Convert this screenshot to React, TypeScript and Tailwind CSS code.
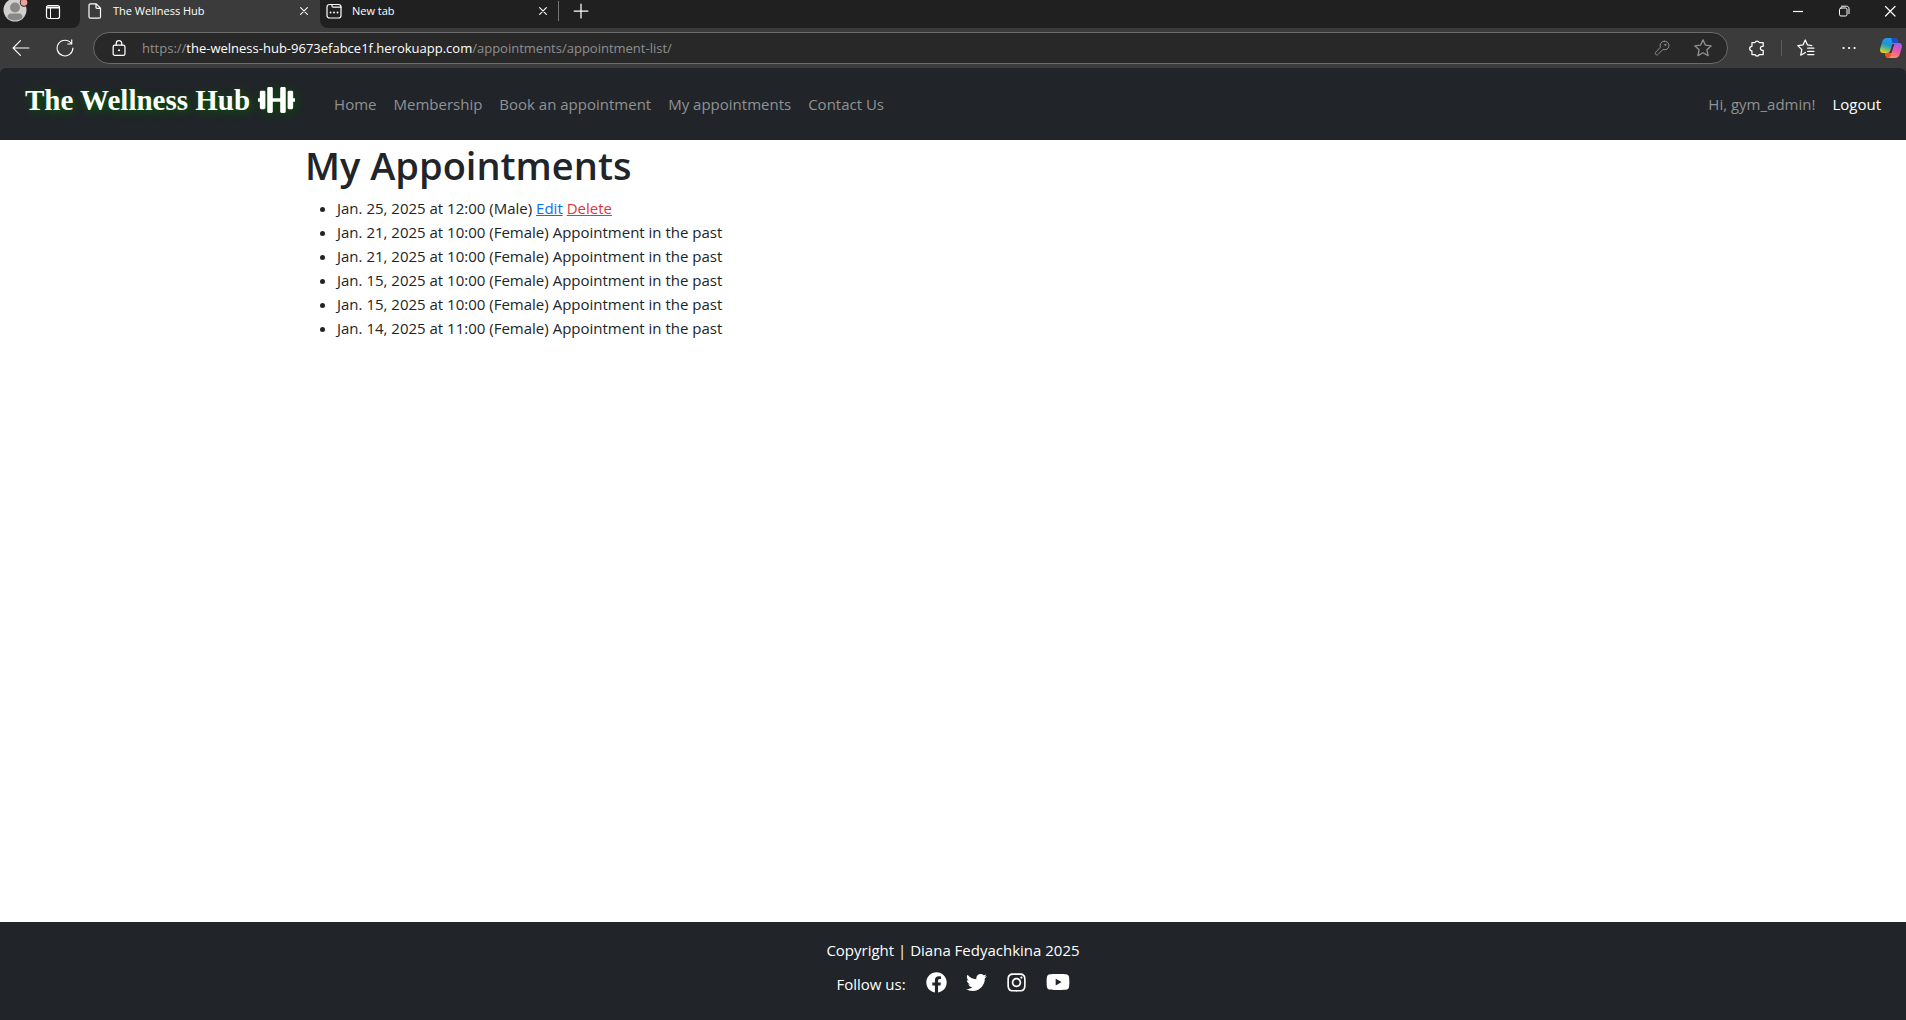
import type { ReactNode } from "react";
import { FaDumbbell, FaFacebook, FaInstagram, FaTwitter, FaYoutube } from "react-icons/fa";

const navLinks = ["Home", "Membership", "Book an appointment", "My appointments", "Contact Us"];

const appointments = [
  { when: "Jan. 25, 2025 at 12:00", who: "Male", past: false },
  { when: "Jan. 21, 2025 at 10:00", who: "Female", past: true },
  { when: "Jan. 21, 2025 at 10:00", who: "Female", past: true },
  { when: "Jan. 15, 2025 at 10:00", who: "Female", past: true },
  { when: "Jan. 15, 2025 at 10:00", who: "Female", past: true },
  { when: "Jan. 14, 2025 at 11:00", who: "Female", past: true },
];

const socials = [
  { name: "Facebook", Icon: FaFacebook, size: "h-[21px] w-[21px]" },
  { name: "Twitter", Icon: FaTwitter, size: "h-[21px] w-[21px]" },
  { name: "Instagram", Icon: FaInstagram, size: "h-[21px] w-[21px]" },
  { name: "YouTube", Icon: FaYoutube, size: "h-6 w-6" },
];

function Glyph({ children, className }: { children: ReactNode; className: string }) {
  return (
    <svg viewBox="0 0 16 16" fill="none" stroke="currentColor" strokeLinecap="round" strokeLinejoin="round" className={className} aria-hidden="true">
      {children}
    </svg>
  );
}

function CloseGlyph({ className }: { className: string }) {
  return (
    <Glyph className={className}>
      <path d="M3.500 3.500l9 9M12.500 3.500l-9 9" strokeWidth="1.500" />
    </Glyph>
  );
}

function Avatar() {
  return (
    <svg viewBox="0 0 28 24" className="h-6 w-7" aria-hidden="true">
      <circle cx="12" cy="10" r="11.500" fill="#d2d0ce" />
      <circle cx="12" cy="7.500" r="5" fill="#8a8886" />
      <path d="M4.500 17.500C4.500 14.500 6 13.500 8 13.500h8c2 0 3.500 1 3.500 4-2 2.200-4.500 3-7.500 3s-5.500-.8-7.500-3z" fill="#8a8886" />
      <circle cx="21" cy="2.500" r="4.200" fill="#202020" />
      <circle cx="21" cy="2.500" r="3.300" fill="#f1a09a" />
    </svg>
  );
}

function Copilot() {
  return (
    <svg viewBox="0 0 24 24" className="h-6 w-6" aria-hidden="true">
      <defs>
        <linearGradient id="cpLeft" x1="0.600" y1="0" x2="0.200" y2="1">
          <stop offset="0" stopColor="#1aa0f0" />
          <stop offset="0.450" stopColor="#1f93d8" />
          <stop offset="0.700" stopColor="#5dbb7b" />
          <stop offset="1" stopColor="#f5cb20" />
        </linearGradient>
        <linearGradient id="cpRight" x1="0.700" y1="0" x2="0.300" y2="1">
          <stop offset="0" stopColor="#a35af0" />
          <stop offset="0.500" stopColor="#ee5aa0" />
          <stop offset="1" stopColor="#ff9a50" />
        </linearGradient>
      </defs>
      <path d="M8 2h8c1.500 0 2 1 2.500 2.500l.8 2.500h-3c-1.500 0-2.300 1-2.800 2.500L11 17H4.500C1.500 17 .5 15 1.300 12l2-6.500C4 3.200 5.500 2 8 2z" fill="url(#cpLeft)" />
      <path d="M12 2h4c1.500 0 2 1 2.500 2.500l.8 2.500h-3c-1 0-1.800.5-2.300 1.500z" fill="#2448c9" />
      <path d="M16 22H9c-1.500 0-2-1-2.500-2.500L5.800 17h2.500c1.500 0 2.300-1 2.800-2.500L13.500 7h6c3 0 4 2 3.200 5l-2 6.500C20 20.800 18.500 22 16 22z" fill="url(#cpRight)" />
      <path d="M5.800 17h2.500c1.500 0 2.300-1 2.800-2.500l1 4c-.5 2-1.500 3.500-3.100 3.500-1.500 0-2-1-2.500-2.500z" fill="#e8502e" />
      <path d="M13.300 8h2.200l-3 9H9.800c.8-.5 1.200-1.300 1.500-2.500z" fill="#3b3b3b" />
    </svg>
  );
}

function TabStrip() {
  return (
    <div className="flex h-7 items-stretch bg-[#202020] font-['Open_Sans',sans-serif] text-[11px] text-white">
      <div className="flex bg-[#3b3b3b]">
        <div className="flex w-20 items-center gap-[14px] rounded-br-lg bg-[#202020] pb-1 pl-[3px]">
          <button aria-label="Profile"><Avatar /></button>
          <button aria-label="Tab actions">
            <Glyph className="h-4 w-4">
              <rect x="1.500" y="1.500" width="13" height="13" rx="2" strokeWidth="1.200" />
              <path d="M2 3.500h12" strokeWidth="2" />
              <path d="M5.500 4v10" />
            </Glyph>
          </button>
        </div>
      </div>
      <div className="flex w-60 items-center bg-[#3b3b3b] pb-[6px] pl-[7px]">
        <Glyph className="h-4 w-4">
          <path d="M3.500.8h5.700l4.300 4.300v8.600c0 .9-.6 1.500-1.500 1.500H3.500c-.9 0-1.500-.6-1.500-1.500V2.300C2 1.400 2.600.8 3.500.8zM9 .8v3.400c0 .7.400 1.100 1.100 1.100h3.400" strokeWidth="1.200" />
        </Glyph>
        <span className="ml-[10px] flex-1">The Wellness Hub</span>
        <button aria-label="Close The Wellness Hub" className="mr-2"><CloseGlyph className="h-4 w-4 p-[2px]" /></button>
      </div>
      <div className="flex bg-[#3b3b3b]">
        <div className="flex w-[238px] items-center rounded-bl-lg bg-[#202020] pb-[6px] pl-[6px]">
          <Glyph className="h-4 w-4">
            <rect x="1" y="1.500" width="14" height="13.500" rx="2.500" strokeWidth="1.200" />
            <path d="M6 1.500v1.500c0 .8.400 1.200 1.200 1.200H15" strokeWidth="1.200" />
            <path d="M4.500 9.500h.1M8 9.500h.1M11.500 9.500h.1" strokeWidth="1.800" />
          </Glyph>
          <span className="ml-[10px] flex-1">New tab</span>
          <button aria-label="Close New tab" className="mr-[7px]"><CloseGlyph className="h-4 w-4 p-[2px]" /></button>
        </div>
      </div>
      <div className="mt-px h-5 w-px self-start bg-[#757575]" />
      <button aria-label="New tab" className="mb-[6px] ml-3">
        <Glyph className="h-5 w-5"><path d="M8 2.500v11M2.500 8h11" strokeWidth="1" /></Glyph>
      </button>
      <div className="ml-auto flex items-center gap-[30px] pb-[6px] pr-2">
        <button aria-label="Minimize"><Glyph className="h-4 w-4"><path d="M3 8.500h10" strokeWidth="1.200" strokeLinecap="butt" /></Glyph></button>
        <button aria-label="Restore">
          <Glyph className="h-4 w-4">
            <rect x="3.500" y="5" width="7.500" height="8" rx="1.500" />
            <path d="M5.500 3.200h5c1.500 0 2.500 1 2.500 2.500v5" />
          </Glyph>
        </button>
        <button aria-label="Close window"><Glyph className="h-4 w-4"><path d="M3.500 3.500l9.500 9.500M13 3.500L3.500 13" strokeWidth="1.200" /></Glyph></button>
      </div>
    </div>
  );
}

function Toolbar() {
  return (
    <div className="flex h-10 items-center bg-[#3b3b3b] pr-[3px] text-white">
      <button aria-label="Back" className="ml-3">
        <Glyph className="h-[18px] w-[18px]"><path d="M15 8H1M7.500 1.500L1 8l6.500 6.500" /></Glyph>
      </button>
      <button aria-label="Refresh" className="ml-[26px]">
        <Glyph className="h-[18px] w-[18px]"><path d="M13.700 4A7 7 0 1 0 15 8M14 .8v3.600h-3.600" /></Glyph>
      </button>
      <div className="ml-[19px] flex h-8 flex-1 items-center rounded-full border border-[#6b6b6b] bg-[#282828] pl-4 pr-[15px]">
        <Glyph className="h-[18px] w-[18px]">
          <rect x="2.800" y="5.500" width="10.500" height="9" rx="1.500" strokeWidth="1.100" />
          <path d="M5.500 5.500V4a2.500 2.500 0 0 1 5 0v1.500" strokeWidth="1.100" />
          <circle cx="8" cy="10" r=".4" fill="currentColor" />
        </Glyph>
        <div className="ml-[14px] flex-1 font-['Open_Sans',sans-serif] text-[13px] leading-5 text-[#8f8f8f]">
          https://<span className="text-white">the-welness-hub-9673efabce1f.herokuapp.com</span>/appointments/appointment-list/
        </div>
        <button aria-label="Saved passwords" className="mr-6 text-[#8f8f8f]">
          <Glyph className="h-4 w-4">
            <path d="M10.200 1.200a4.300 4.300 0 1 1-1.200 8.200L4.200 14.300c-.8.800-2.100.8-2.600.1-.5-.7-.4-1.700.3-2.400L6.400 7.200a4.300 4.300 0 0 1 3.800-6z" />
            <circle cx="11.300" cy="4.800" r=".6" fill="currentColor" />
          </Glyph>
        </button>
        <button aria-label="Add to favorites" className="text-[#8f8f8f]">
          <Glyph className="h-[18px] w-[18px]"><path d="M8 .8l2.200 4.700 5.100.6-3.800 3.500 1 5.200L8 12.200l-4.500 2.600 1-5.200L.7 6.100l5.100-.6z" strokeWidth="1.200" /></Glyph>
        </button>
      </div>
      <button aria-label="Extensions" className="ml-5">
        <Glyph className="h-[18px] w-[18px]">
          <path d="M3.500 3.200h2.700a2 2 0 0 1 3.800 0h3.500v3.300h-.7a1.800 1.800 0 0 0 0 3.600h.7v3.700H10a2 2 0 0 1-3.800 0H3.500v-3.300a2 2 0 0 1 0-4z" strokeWidth="1.100" />
        </Glyph>
      </button>
      <div className="ml-[15px] h-4 w-px bg-[#5c5c5c]" />
      <button aria-label="Favorites" className="ml-[15px]">
        <Glyph className="h-[18px] w-[18px]">
          <path d="M13.200 5.800L9.300 5.300 7.300.9 5.300 5.300.8 5.900l3.500 3.500-1 5L7.500 12M9.500 8.200H15M9.500 11h5.500M9.500 13.800H15" strokeWidth="1.100" />
        </Glyph>
      </button>
      <button aria-label="Settings and more" className="ml-[26px]">
        <Glyph className="h-4 w-4"><path d="M2.500 8h.1M8 8h.1M13.500 8h.1" strokeWidth="2.200" /></Glyph>
      </button>
      <button aria-label="Copilot" className="ml-[22px]"><Copilot /></button>
    </div>
  );
}

export default function App() {
  return (
    <div className="flex min-h-screen flex-col bg-white font-['Open_Sans','Noto_Sans',sans-serif] text-[15px] leading-6 text-[#212529]">
      <TabStrip />
      <Toolbar />
      <header className="bg-[#3b3b3b]">
        <nav className="flex h-[72px] items-center rounded-t-md bg-[#212529] px-[25px] text-[#909294]">
          <a href="#" className="mb-2 flex items-center gap-2 whitespace-nowrap font-['Liberation_Serif',serif] text-[29px] font-bold leading-9 text-white [text-shadow:2px_2px_8px_#006400]">
            The Wellness Hub
            <FaDumbbell className="h-[30px] w-[37px] [filter:drop-shadow(2px_2px_4px_#004d00)]" />
          </a>
          <ul className="ml-[39px] flex gap-[17px]">
            {navLinks.map((label) => (
              <li key={label}><a href="#">{label}</a></li>
            ))}
          </ul>
          <div className="ml-auto flex gap-[17px]">
            <span>Hi, gym_admin!</span>
            <a href="#" className="text-white">Logout</a>
          </div>
        </nav>
      </header>
      <main className="mx-auto w-full max-w-[1320px] flex-1 px-3">
        <h1 className="mb-[9px] mt-[3px] text-[38px] font-semibold leading-[44px]">My Appointments</h1>
        <ul className="list-disc pl-8">
          {appointments.map((item, index) => (
            <li key={index}>
              {item.when} ({item.who}){" "}
              {item.past ? (
                "Appointment in the past"
              ) : (
                <>
                  <a href="#" className="text-[#0d6efd] underline">Edit</a>{" "}
                  <a href="#" className="text-[#dc3545] underline">Delete</a>
                </>
              )}
            </li>
          ))}
        </ul>
      </main>
      <footer className="flex flex-col items-center bg-[#212529] pb-6 pt-4 text-white">
        <p className="mb-2">Copyright | Diana Fedyachkina 2025</p>
        <div className="flex items-center">
          <span className="mr-5 pt-[2px]">Follow us:</span>
          <ul className="flex items-center gap-[19px] pb-[2px]">
            {socials.map(({ name, Icon, size }) => (
              <li key={name}>
                <a href="#" aria-label={name}><Icon className={size} /></a>
              </li>
            ))}
          </ul>
        </div>
      </footer>
    </div>
  );
}
